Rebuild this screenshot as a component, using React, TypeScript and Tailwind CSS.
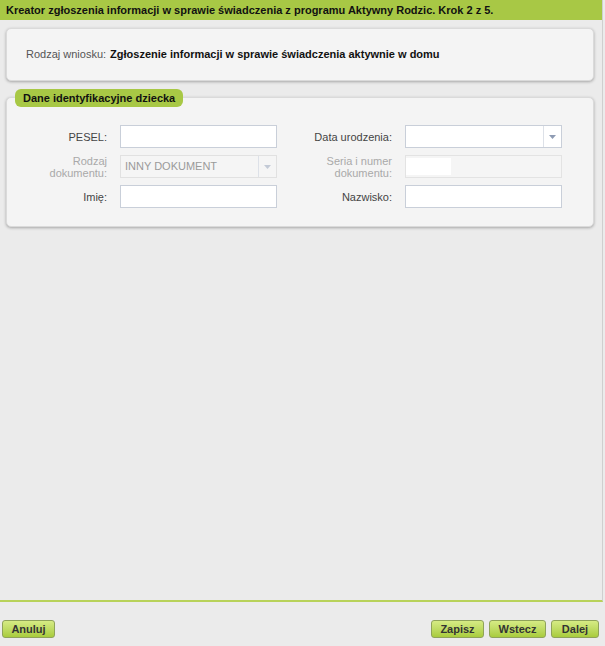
const Arrow = ({ muted = false }: { muted?: boolean }) => (
  <div className="w-[18px] h-full border-l border-[#dde1e8] flex items-center justify-center">
    <svg width="7" height="4" viewBox="0 0 7 4">
      <path d="M0 0h7L3.5 4z" fill={muted ? "#c3cad6" : "#8e9bb3"} />
    </svg>
  </div>
);

const Label = ({ children, muted = false }: { children: React.ReactNode; muted?: boolean }) => (
  <div
    className={`w-[92px] text-right text-[11px] leading-[12px] ${muted ? "text-[#a9a9a9]" : "text-[#444]"}`}
  >
    {children}
  </div>
);

const btn =
  "h-[18px] rounded-[3px] border border-[#8fa35a] bg-gradient-to-b from-[#d6eb84] to-[#a9cc3c] text-[11px] font-bold text-[#333] leading-[16px]";

export default function App() {
  return (
    <div className="w-[605px] h-[646px] bg-[#ebebeb] flex flex-col font-['Liberation_Sans',Arial,sans-serif] text-[#222]">
      <div className="w-[603px] flex-1 flex flex-col border-r border-[#cfcfcf] border-b-2 border-b-[#b8d25a]">
        <div className="h-[20px] bg-[#a8c845] px-[6px] text-[11px] font-bold leading-[20px] text-[#111]">
          Kreator zgłoszenia informacji w sprawie świadczenia z programu Aktywny Rodzic. Krok 2 z 5.
        </div>

        <div className="px-[6px] pt-[8px] pr-[8px]">
          <div className="h-[53px] bg-[#f4f4f4] border border-[#dadada] rounded-[5px] shadow-[0_1px_3px_rgba(0,0,0,0.3)] flex items-center px-[19px] gap-[4px] text-[11px]">
            <span className="text-[#555]">Rodzaj wniosku:</span>
            <span className="font-bold text-[#111]">Zgłoszenie informacji w sprawie świadczenia aktywnie w domu</span>
          </div>

          <div className="relative mt-[16px]">
            <div className="absolute left-[9px] -top-[8px] h-[18px] px-[8px] bg-[#a8c845] rounded-[6px] text-[11px] font-bold leading-[18px] text-[#111]">
              Dane identyfikacyjne dziecka
            </div>
            <div className="h-[130px] bg-[#f4f4f4] border border-[#dadada] rounded-[5px] shadow-[0_1px_3px_rgba(0,0,0,0.3)] pt-[27px] pl-[8px]">
              <div className="grid grid-cols-[270px_270px] gap-x-[15px] gap-y-[7px]">
                <div className="flex items-center gap-[13px] h-[23px]">
                  <Label>PESEL:</Label>
                  <div className="w-[157px] h-[23px] bg-white border border-[#c9cfd9]" />
                </div>
                <div className="flex items-center gap-[13px] h-[23px]">
                  <Label>Data urodzenia:</Label>
                  <div className="w-[157px] h-[23px] bg-white border border-[#c9cfd9] flex justify-end">
                    <Arrow />
                  </div>
                </div>

                <div className="flex items-center gap-[13px] h-[23px]">
                  <Label muted>
                    Rodzaj
                    <br />
                    dokumentu:
                  </Label>
                  <div className="w-[157px] h-[23px] bg-[#f5f5f5] border border-[#e1e1e1] flex items-center justify-between text-[11px] text-[#9a9a9a]">
                    <span className="pl-[4px]">INNY DOKUMENT</span>
                    <Arrow muted />
                  </div>
                </div>
                <div className="flex items-center gap-[13px] h-[23px]">
                  <Label muted>
                    Seria i numer
                    <br />
                    dokumentu:
                  </Label>
                  <div className="w-[157px] h-[23px] bg-[#f5f5f5] border border-[#e3e3e3] flex items-center">
                    <div className="w-[45px] h-[17px] bg-white" />
                  </div>
                </div>

                <div className="flex items-center gap-[13px] h-[23px]">
                  <Label>Imię:</Label>
                  <div className="w-[157px] h-[23px] bg-white border border-[#c9cfd9]" />
                </div>
                <div className="flex items-center gap-[13px] h-[23px]">
                  <Label>Nazwisko:</Label>
                  <div className="w-[157px] h-[23px] bg-white border border-[#c9cfd9]" />
                </div>
              </div>
            </div>
          </div>
        </div>
      </div>

      <div className="h-[44px] flex items-start justify-between pt-[18px] pl-[2px] pr-[6px]">
        <button className={`${btn} w-[53px]`}>Anuluj</button>
        <div className="flex gap-[5px]">
          <button className={`${btn} w-[53px]`}>Zapisz</button>
          <button className={`${btn} w-[57px]`}>Wstecz</button>
          <button className={`${btn} w-[48px]`}>Dalej</button>
        </div>
      </div>
    </div>
  );
}
